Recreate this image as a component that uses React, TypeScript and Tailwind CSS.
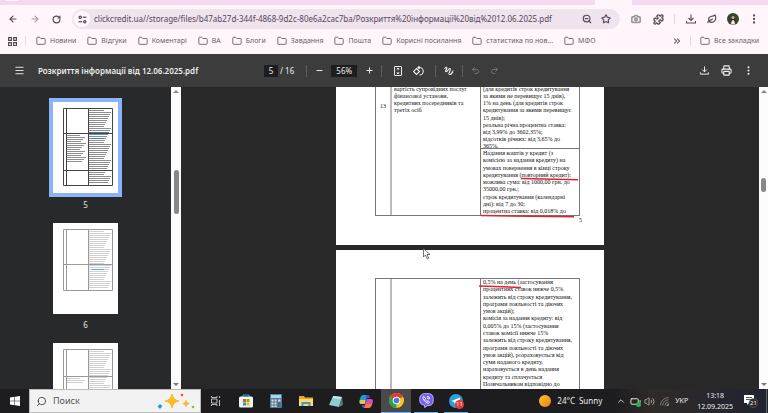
import {
  ArrowLeft,
  ArrowRight,
  Battery,
  Camera,
  ChevronUp,
  ChevronsRight,
  EllipsisVertical,
  Folder,
  Leaf,
  Menu,
  Minus,
  Plus,
  Printer,
  Puzzle,
  Redo2,
  RotateCw,
  Search,
  Star,
  Undo2,
  Volume2,
  ZoomOut,
} from "lucide-react"

const bookmarks = [
  "Новини",
  "Відгуки",
  "Коментарі",
  "ВА",
  "Блоги",
  "Завдання",
  "Пошта",
  "Корисні посилання",
  "статистика по нов...",
  "МФО",
]

const serviceLines = [
  "вартість супровідних послуг",
  "фінансової установи,",
  "кредитних посередників та",
  "третіх осіб",
]

const firstCreditLines = [
  "(для кредитів строк кредитування",
  "за якими не перевищує 15 днів),",
  "1% на день (для кредитів строк",
  "кредитування за якими перевищує",
  "15 днів);",
  "реальна річна процентна ставка:",
  "від 3,99% до 3602,35%;",
  "відсотків річних: від 3,65% до",
  "365%.",
]

const repeatCreditLines = [
  "Надання коштів у кредит (з",
  "комісією за надання кредиту) на",
  "умовах повернення в кінці строку",
  "кредитування (повторний кредит):",
  "можлива сума: від 1000,00 грн. до",
  "35000,00 грн.;",
  "строк кредитування (календарні",
  "дні): від 7 до 30;",
  "процентна ставка: від 0,018% до",
]

const nextPageLines = [
  "0,5% на день (застосування",
  "процентних ставок нижче 0,5%",
  "залежить від строку кредитування,",
  "програми лояльності та діючих",
  "умов акцій);",
  "комісія за надання кредиту: від",
  "0,005% до 15% (застосування",
  "ставок комісії нижче 15%",
  "залежить від строку кредитування,",
  "програми лояльності та діючих",
  "умов акцій), розраховується від",
  "суми наданого кредиту,",
  "нараховується в день надання",
  "кредиту та сплачується",
  "Позичальником відповідно до",
]

function Lines({ lines, className }: { lines: string[]; className: string }) {
  return (
    <div className={`flex flex-col justify-between whitespace-nowrap ${className}`}>
      {lines.map((line, index) => (
        <span key={index} className="block">
          {line}
        </span>
      ))}
    </div>
  )
}

function DownloadIcon({ className }: { className: string }) {
  return (
    <svg viewBox="0 0 20 20" className={className} fill="none" stroke="currentColor" strokeWidth="2.2">
      <path d="M10 1v12M5 8l5 5 5-5M1 14v4h18v-4" />
    </svg>
  )
}

function TabStrip() {
  return (
    <div className="flex h-[5px] bg-[#f5d9ef]">
      <div className="ml-[6px] h-px w-3 bg-[#fff5fb]" />
      <div className="mr-[136px] ml-auto h-full w-[37px] bg-[#fff5fa]" />
    </div>
  )
}

function AddressBar() {
  return (
    <div className="flex h-7 items-center pr-2 pl-2 text-[#5b4a57]">
      <button aria-label="Назад" className="flex w-[10px] justify-center">
        <ArrowLeft className="size-[10px]" strokeWidth={2.8} />
      </button>
      <button aria-label="Вперед" className="ml-3 flex w-[10px] justify-center text-[#a89ba5]">
        <ArrowRight className="size-[10px]" strokeWidth={2.6} />
      </button>
      <button aria-label="Оновити" className="ml-3 flex w-[9px] justify-center">
        <RotateCw className="size-[9px]" strokeWidth={3.2} />
      </button>
      <div className="ml-[11px] flex h-5 flex-1 items-center rounded-full bg-[#efe3ee] pr-[9px] pl-[2px]">
        <button aria-label="Відомості про сайт" className="flex size-4 items-center justify-center rounded-full bg-[#fff7fc]">
          <svg viewBox="0 0 16 16" className="size-[9px]" fill="none" stroke="currentColor" strokeWidth="2.2">
            <circle cx="4" cy="4" r="2" />
            <path d="M8.5 4H15" />
            <circle cx="12" cy="12" r="2" />
            <path d="M1 12H7.5" />
          </svg>
        </button>
        <input
          aria-label="Адреса"
          readOnly
          className="ml-1 min-w-0 flex-1 bg-transparent text-[8px] text-[#56485a] outline-none"
          value="clickcredit.ua//storage/files/b47ab27d-344f-4868-9d2c-80e6a2cac7ba/Розкриття%20інформації%20від%2012.06.2025.pdf"
        />
        <button aria-label="Масштаб">
          <ZoomOut className="size-[10px]" strokeWidth={2.8} />
        </button>
        <button aria-label="Додати закладку" className="ml-[9px]">
          <Star className="size-[10px]" strokeWidth={2.8} />
        </button>
      </div>
      <button aria-label="Знімок" className="ml-[11px] text-[#9c979b]">
        <Camera className="size-[10px]" strokeWidth={4} />
      </button>
      <button aria-label="Розширення" className="ml-3">
        <Puzzle className="size-[11px]" strokeWidth={2.8} />
      </button>
      <span className="ml-[10px] h-[10px] w-px bg-[#f5cfea]" />
      <button aria-label="Завантаження" className="ml-[11px]">
        <DownloadIcon className="size-[10px]" />
      </button>
      <button aria-label="Економія енергії" className="ml-[11px]">
        <Leaf className="size-[10px]" strokeWidth={2.8} />
      </button>
      <button aria-label="Профіль" className="ml-[10px]">
        <svg viewBox="0 0 12 12" className="size-[12px]">
          <circle cx="6" cy="6" r="6" fill="#34482f" />
          <path d="M4 6c0-4 4-4 4 0v5H4z" fill="#3a2320" />
          <circle cx="6" cy="4.5" r="1.5" fill="#e0b09b" />
          <path d="M4 11.5c0-6 4-6 4 0z" fill="#eee4e4" />
        </svg>
      </button>
      <button aria-label="Меню" className="ml-[9px]">
        <EllipsisVertical className="size-[12px]" strokeWidth={2.6} />
      </button>
    </div>
  )
}

function BookmarkBar() {
  return (
    <div className="flex h-[21px] items-center pr-[9px] pb-[5px] pl-2 text-[7px] text-[#6c5e69]">
      <svg viewBox="0 0 16 16" className="size-[9px] text-[#54474f]" fill="none" stroke="currentColor" strokeWidth="2">
        <path d="M1 1h5v5H1zM10 1h5v5h-5zM1 10h5v5H1zM10 10h5v5h-5z" />
      </svg>
      <span className="ml-2 h-[10px] w-px bg-[#f8d5ee]" />
      <nav className="ml-[10px] flex gap-[11px]">
        {bookmarks.map((name) => (
          <a key={name} href="#" className="flex items-center gap-1 whitespace-nowrap">
            <Folder className="size-[10px] text-[#5e515a]" strokeWidth={2} />
            {name}
          </a>
        ))}
      </nav>
      <button aria-label="Інші закладки" className="ml-auto">
        <ChevronsRight className="size-[10px]" strokeWidth={2.6} />
      </button>
      <span className="ml-2 h-[10px] w-px bg-[#f5cfea]" />
      <a href="#" className="ml-[9px] flex items-center gap-1 whitespace-nowrap">
        <Folder className="size-[10px] text-[#5e515a]" strokeWidth={2} />
        Все закладки
      </a>
    </div>
  )
}

function Divider({ className }: { className: string }) {
  return <span className={`h-3 w-px bg-[#5f5f5f] ${className}`} />
}

function PdfToolbar() {
  return (
    <header className="relative z-10 flex h-[33px] shrink-0 items-center bg-[#3c3c3c] px-[14px] text-[8px] text-[#ededed]">
      <button aria-label="Меню документа">
        <Menu className="size-[11px]" />
      </button>
      <h1 className="ml-[13px] w-[226px] font-semibold whitespace-nowrap">Розкриття інформації від 12.06.2025.pdf</h1>
      <input aria-label="Сторінка" defaultValue="5" className="h-3 w-[14px] bg-[#1d1d1d] text-center outline-none" />
      <span className="ml-[2px] whitespace-nowrap">/ 16</span>
      <Divider className="ml-3" />
      <button aria-label="Зменшити" className="ml-2">
        <Minus className="size-[9px]" strokeWidth={2.6} />
      </button>
      <input aria-label="Масштаб сторінки" defaultValue="56%" className="ml-[7px] h-3 w-[26px] bg-[#1d1d1d] text-center outline-none" />
      <button aria-label="Збільшити" className="ml-2">
        <Plus className="size-[9px]" strokeWidth={2.6} />
      </button>
      <Divider className="ml-[7px]" />
      <button aria-label="За розміром сторінки" className="ml-3">
        <svg viewBox="0 0 16 20" className="h-[10px] w-2" fill="none" stroke="currentColor" strokeWidth="2">
          <rect x="1" y="1" width="14" height="18" rx="1" />
          <path d="M8 4v4M5.5 6.5L8 4l2.5 2.5M8 16v-4M5.5 13.5L8 16l2.5-2.5" />
        </svg>
      </button>
      <button aria-label="Повернути" className="ml-[11px]">
        <svg viewBox="0 0 22 20" className="h-[10px] w-[11px]" fill="none" stroke="currentColor" strokeWidth="2.2">
          <path d="M7 5l6 6-6 6-6-6zM10 3h3a7 7 0 0 1 0 15M13 0l-3 3 3 3" />
        </svg>
      </button>
      <Divider className="ml-[11px]" />
      <button aria-label="Малювати" className="ml-2">
        <svg viewBox="0 0 20 20" className="size-[10px]" fill="none" stroke="currentColor" strokeWidth="2.2">
          <path d="M1 6c3-5 6-4 4 0s-3 6 0 5 4-7 7-6-3 8-2 11c2 3 7-2 8-7M13 17l5-5" />
        </svg>
      </button>
      <Divider className="ml-2" />
      <button aria-label="Скасувати" className="ml-2 text-[#777]">
        <Undo2 className="size-[9px]" strokeWidth={2.6} />
      </button>
      <button aria-label="Повторити" className="ml-[10px] text-[#777]">
        <Redo2 className="size-[9px]" strokeWidth={2.6} />
      </button>
      <button aria-label="Завантажити" className="ml-auto">
        <DownloadIcon className="size-[9px]" />
      </button>
      <button aria-label="Друк" className="ml-3">
        <Printer className="size-[11px]" strokeWidth={2.4} />
      </button>
      <button aria-label="Інші дії" className="ml-[11px]">
        <EllipsisVertical className="size-[11px]" strokeWidth={2.6} />
      </button>
    </header>
  )
}

type ThumbnailProps = {
  bottom: number
  splits: number[]
  links: number[]
  notes?: number
  notesTop?: number
  dark?: boolean
}

// Miniature page drawing: a ruled table with grey strokes for the text lines
function Thumbnail({ bottom, splits, links, notes = 0, notesTop = 0, dark }: ThumbnailProps) {
  const ink = dark ? "#444" : "#999"
  const rows = Array.from({ length: Math.floor((bottom - 9) / 2) }, (_, index) => index)
  const noteRows = Array.from({ length: notes }, (_, index) => index)
  return (
    <svg viewBox="0 0 65 91" className="block h-[91px] w-[65px] bg-white">
      {rows.map((row) => (
        <rect key={row} x="36" y={8 + row * 2} width={15 + ((row * 7) % 8)} height="1" fill={ink} opacity={dark ? 0.6 : 0.45} />
      ))}
      {noteRows.map((row) => (
        <rect key={row} x="14" y={notesTop + row * 2} width={13 + ((row * 5) % 7)} height="1" fill={ink} opacity={dark ? 0.6 : 0.45} />
      ))}
      {links.map((link, index) => (
        <rect key={link} x={index || !dark ? 39 : 36} y={link} width={index || !dark ? 12 : 20} height="1" fill="#2a82c9" opacity={dark ? 1 : 0.6} />
      ))}
      <path d={`M10.500 6.500H59.500V${bottom}H10.500zM13.500 6.500V${bottom}M35.500 6.500V${bottom}`} fill="none" stroke={ink} />
      {splits.map((split) => (
        <path key={split} d={`M10.500 ${split}H59.500`} stroke={ink} />
      ))}
    </svg>
  )
}

function Sidebar() {
  return (
    <aside className="flex shrink-0 bg-[#28292a]">
      <div className="flex w-[171px] flex-col items-center overflow-hidden pt-[11px] text-[8px] leading-3 text-[#e3e3e3]">
        <a href="#" className="flex flex-col items-center">
          <span className="border-4 border-[#8ab4f8]">
            <Thumbnail dark bottom={83.5} splits={[31.5, 68.5]} links={[30, 36]} notes={14} notesTop={33} />
          </span>
          <span className="mt-[2px]">5</span>
        </a>
        <a href="#" className="mt-3 flex flex-col items-center">
          <Thumbnail bottom={67.5} splits={[41.5]} links={[46]} />
          <span className="mt-[5px]">6</span>
        </a>
        <a href="#" className="mt-3 block">
          <Thumbnail bottom={83.5} splits={[33.5]} links={[]} notes={3} notesTop={35} />
        </a>
      </div>
      <div className="flex w-[10px] flex-col items-center bg-[#fcfcfc] pt-[3px] pb-[3px]">
        <span className="border-x-[3px] border-b-[3px] border-x-transparent border-b-[#888]" />
        <span className="mt-[77px] h-[44px] w-[5px] rounded-full bg-[#888]" />
        <span className="mt-auto border-x-[3px] border-t-[3px] border-x-transparent border-t-[#777]" />
      </div>
    </aside>
  )
}

function Viewer() {
  return (
    <main className="flex min-w-0 flex-1 flex-col items-center overflow-hidden bg-[#282828] font-['Liberation_Serif',serif] text-[6px] leading-[7px] text-[#111]">
      <section className="flex w-[268px] shrink-0 flex-col bg-white">
        <div className="relative ml-[39px] flex h-[129px] w-[205px] border border-t-0 border-[#777]">
          <div className="w-4 shrink-0 border-r-2 border-r-[#bbb] pt-[16px] text-center">13</div>
          <div className="w-[89px] shrink-0 border-r border-[#777] pl-[2px]">
            <Lines lines={serviceLines} className="-mt-px h-[28px]" />
          </div>
          <div className="min-w-0 flex-1">
            <div className="h-[63px] border-b border-[#777] pl-[2px]">
              <Lines lines={firstCreditLines} className="-mt-px h-[64px]" />
            </div>
            <div className="pt-px pl-[2px]">
              <Lines lines={repeatCreditLines} className="h-[65px]" />
            </div>
          </div>
          <svg viewBox="0 0 206 132" className="absolute top-0 left-0 h-[132px] w-[206px] overflow-visible" fill="none" stroke="#e0232b" strokeWidth="1.5">
            <path d="M145 91.500L202 92.800M105 128.500L198 129.800" />
          </svg>
        </div>
        <div className="mt-px mb-[21px] pr-[22px] text-right">5</div>
      </section>
      <section className="relative mt-[5px] w-[268px] shrink-0 bg-white pt-[28px]">
        <div className="relative ml-[39px] flex h-[150px] w-[205px] border border-[#777]">
          <div className="w-4 shrink-0 border-r-2 border-r-[#bbb]" />
          <div className="w-[89px] shrink-0 border-r border-[#777]" />
          <div className="min-w-0 flex-1 pl-[2px]">
            <Lines lines={nextPageLines} className="h-[109px]" />
          </div>
          <svg viewBox="0 0 206 20" className="absolute top-0 left-0 h-5 w-[206px]" fill="none" stroke="#e0232b" strokeWidth="1.5">
            <path d="M103 7L145 8.500" />
          </svg>
        </div>
        <svg viewBox="0 0 16 24" className="absolute -top-[2px] left-[87px] h-3 w-2" fill="#fff" stroke="#444" strokeWidth="1.5">
          <path d="M1 1v17l4-4 3.500 8 3-1.500L8 13h6z" />
        </svg>
      </section>
    </main>
  )
}

function TaskApp({ label, active, open, children }: { label: string; active?: boolean; open?: boolean; children: React.ReactNode }) {
  return (
    <button
      aria-label={label}
      className={`flex h-full w-[30px] flex-col items-center ${active ? "bg-[#4a4a4d]" : ""}`}
    >
      <span className="flex flex-1 items-center">{children}</span>
      {active && <span className="h-px w-full bg-[#6cb4ee]" />}
      {open && <span className="h-px w-6 bg-[#6cb4ee]" />}
    </button>
  )
}

function Taskbar() {
  return (
    <footer className="flex h-6 shrink-0 items-center bg-linear-to-r from-[#1d1d20] from-80% via-[#302b29] via-85% to-[#1f2230] text-[8px] text-[#eee]">
      <button aria-label="Пуск" className="flex h-full w-[29px] items-center justify-center">
        <svg viewBox="0 0 20 20" className="size-[10px]" fill="#fff">
          <path d="M0 3l9-1.300V9.500H0zM10 1.500L20 0v9.500H10zM0 10.500h9v8L0 17zM10 10.500h10V20l-10-1.500z" />
        </svg>
      </button>
      <label className="flex h-full w-[172px] items-center border border-[#bbb] bg-[#f2f2f2] pl-[6px] text-[#333]">
        <Search className="size-[11px] -scale-x-100" strokeWidth={1.8} />
        <input placeholder="Поиск" className="ml-[6px] w-[90px] bg-transparent text-[9px] outline-none placeholder:text-[#555]" />
        <svg viewBox="0 0 38 18" className="ml-[14px] h-[18px] w-[38px]">
          <path d="M15 2q1 6 7 7-6 1-7 7-1-6-7-7 6-1 7-7z" fill="#f7bd22" stroke="#f7bd22" strokeLinejoin="round" />
          <path d="M29 8q.5 3 3.500 3.500-3 .5-3.500 3.500-.5-3-3.500-3.500 3-.5 3.500-3.500z" fill="#f9b92a" stroke="#f9b92a" strokeWidth=".5" />
          <path d="M3 12l2.500 2L3 17 .5 14.500z" fill="#189fe0" />
          <circle cx="25" cy="3" r="1.300" fill="#e5582c" />
          <circle cx="36" cy="15" r="1.300" fill="#7fc244" />
        </svg>
      </label>
      <TaskApp label="Подання завдань">
        <svg viewBox="0 0 20 20" className="size-[10px]" fill="none" stroke="#bbb" strokeWidth="2">
          <path d="M1 0v3h11V0M1 6h11v8H1zM1 20v-3h11v3M17 0v4M17 8v12" />
        </svg>
      </TaskApp>
      <TaskApp label="Microsoft Store">
        <svg viewBox="0 0 14 14" className="size-[14px]">
          <path d="M4 3.500V1h6v2.500" fill="none" stroke="#36a7e8" />
          <rect y="2.500" width="14" height="11" rx="1.500" fill="#f3f3f3" />
          <path d="M4 5h3v3H4z" fill="#f25022" />
          <path d="M7.500 5h3v3h-3z" fill="#7fba00" />
          <path d="M4 8.500h3v3H4z" fill="#00a4ef" />
          <path d="M7.500 8.500h3v3h-3z" fill="#ffb900" />
        </svg>
      </TaskApp>
      <TaskApp label="Калькулятор">
        <svg viewBox="0 0 12 14" className="h-[14px] w-3">
          <rect width="12" height="14" rx="1" fill="#61798a" />
          <path d="M1 1h10v3H1z" fill="#9fd9f6" />
          <path d="M1.500 5.500h2v2h-2zM4.500 5.500h2v2h-2zM1.500 8.500h2v2h-2zM4.500 8.500h2v2h-2zM1.500 11.500h2v1.500h-2zM4.500 11.500h2v1.500h-2zM8 5.500h2.500v2H8z" fill="#d8e0e5" />
          <path d="M8 8.500h2.500V13H8z" fill="#2474b5" />
        </svg>
      </TaskApp>
      <TaskApp label="Провідник">
        <svg viewBox="0 0 14 12" className="h-3 w-[14px]">
          <path d="M0 1h5l1 1.500h8V11H0z" fill="#e9a820" />
          <path d="M0 4h14v7H0z" fill="#ffda6b" />
          <path d="M2.500 11V7h9v4h-2V9h-5v2z" fill="#3c9ad9" />
        </svg>
      </TaskApp>
      <TaskApp label="Блокнот">
        <svg viewBox="0 0 14 13" className="h-[13px] w-[14px]">
          <path d="M4 1l9 1-3 10-10-2z" fill="#8fcbd1" />
          <path d="M4 1l9 1-1 2-8-1z" fill="#d9e4e6" />
          <path d="M13 2l1 8-4 2z" fill="#557b83" />
        </svg>
      </TaskApp>
      <TaskApp label="Copilot">
        <svg viewBox="0 0 14 13" className="h-[13px] w-[14px]">
          <path d="M4 0h5L6 9H2Q-1 9 1 4 2 0 4 0z" fill="#239bd8" />
          <path d="M1 5h6L6 9H2Q0 9 1 5z" fill="#e9c53b" />
          <path d="M7 0h2q1.500 0 2 3H8L5 13q-2 0-2-3h3z" fill="#3259d2" />
          <path d="M8 4h4q3 0 1.500 4-1 5-4 5H5z" fill="#d84fae" />
          <path d="M7 9h6q-1 4-4 4H5z" fill="#f5783f" />
        </svg>
      </TaskApp>
      <TaskApp label="Chrome" active>
        <svg viewBox="0 0 16 16" className="size-[15px]">
          <circle cx="8" cy="8" r="8" fill="#f9c51b" />
          <path d="M8 8L1.070 4A8 8 0 0 1 14.930 4z" fill="#e33b2e" />
          <path d="M8 8L8 16A8 8 0 0 1 1.070 4z" fill="#2da14c" />
          <circle cx="8" cy="8" r="4" fill="#fff" />
          <circle cx="8" cy="8" r="3" fill="#3f7ee8" />
        </svg>
      </TaskApp>
      <TaskApp label="Viber" open>
        <svg viewBox="0 0 16 16" className="size-[15px]">
          <path d="M8 .5c6 0 7.200 2 7.200 6.500S14 13.500 9 13.500L6 15.500v-2.500C2 12.500.8 11 .8 7S2 .5 8 .5z" fill="#7360f2" stroke="#ddd8ff" strokeWidth=".8" />
          <path d="M5 3.500c-2 1 0 6 5 7.500 2-1 1-2-.5-2.500l-1 .5L6.500 7 7 6zM8.500 3.500q3 0 3 3M8.500 5.200q1.500 0 1.500 1.500" fill="none" stroke="#fff" />
        </svg>
      </TaskApp>
      <TaskApp label="Telegram" open>
        <span className="relative">
          <svg viewBox="0 0 14 14" className="size-[14px]">
            <circle cx="7" cy="7" r="7" fill="#2b9fd9" />
            <path d="M2.500 7L11 3.500 9.500 11 6.500 9 6 10.500 5 8z" fill="#fff" />
          </svg>
          <span className="absolute top-[6px] left-[6px] flex size-[9px] items-center justify-center rounded-full bg-[#e33b3b] text-[6px] leading-none">
            11
          </span>
        </span>
      </TaskApp>
      <div className="ml-auto flex items-center whitespace-nowrap">
        <span className="size-3 rounded-full bg-linear-to-br from-[#ffc52e] to-[#f07b10]" />
        <span className="ml-[6px]">24°C</span>
        <span className="ml-1">Sunny</span>
      </div>
      <button aria-label="Показати приховані піктограми" className="ml-[14px]">
        <ChevronUp className="size-[10px]" strokeWidth={2} />
      </button>
      <span className="relative ml-1">
        <Battery className="size-[11px]" />
        <span className="absolute right-0 bottom-0 size-[5px] rounded-full bg-[#28b34b]" />
      </span>
      <Volume2 className="ml-[3px] size-[11px] text-[#ccc]" strokeWidth={1.6} />
      <svg viewBox="0 0 16 16" className="ml-[5px] size-[9px]" fill="none" stroke="#888" strokeWidth="1.5">
        <path d="M1 15A14 14 0 0 1 15 1M5 15A10 10 0 0 1 15 5M9 15a6 6 0 0 1 6-6" />
        <path d="M12 15l3-3v3z" fill="#fff" />
      </svg>
      <span className="ml-[6px] text-[7px]">УКР</span>
      <div className="ml-[9px] text-center text-[7px] leading-[11px]">
        <div>13:18</div>
        <div>12.09.2025</div>
      </div>
      <button aria-label="Сповіщення" className="relative mr-2 ml-[11px]">
        <svg viewBox="0 0 14 14" className="size-[14px]">
          <path d="M0 1h10v8H5l-2 2V9H0z" fill="#fff" />
          <path d="M2 3.500h6M2 5.500h6" stroke="#555" />
          <circle cx="9.500" cy="9" r="4.500" fill="#2b2b30" stroke="#777" strokeWidth=".5" />
        </svg>
        <span className="absolute top-[6px] left-[6px] text-[6px] leading-none">21</span>
      </button>
      <span className="h-full w-[2px] border-l border-[#666]" />
    </footer>
  )
}

export default function App() {
  return (
    <div className="flex h-screen flex-col overflow-hidden bg-[#fff5fa] font-['Noto_Sans',sans-serif]">
      <TabStrip />
      <AddressBar />
      <BookmarkBar />
      <PdfToolbar />
      <div className="flex min-h-0 flex-1">
        <Sidebar />
        <Viewer />
        <div className="flex w-[9px] flex-col items-center bg-[#fcfcfc] pt-[3px] pb-[3px]">
          <span className="border-x-[3px] border-b-[3px] border-x-transparent border-b-[#888]" />
          <span className="mt-[85px] h-[14px] w-[5px] rounded-full bg-[#888]" />
          <span className="mt-auto border-x-[3px] border-t-[3px] border-x-transparent border-t-[#777]" />
        </div>
      </div>
      <Taskbar />
    </div>
  )
}
